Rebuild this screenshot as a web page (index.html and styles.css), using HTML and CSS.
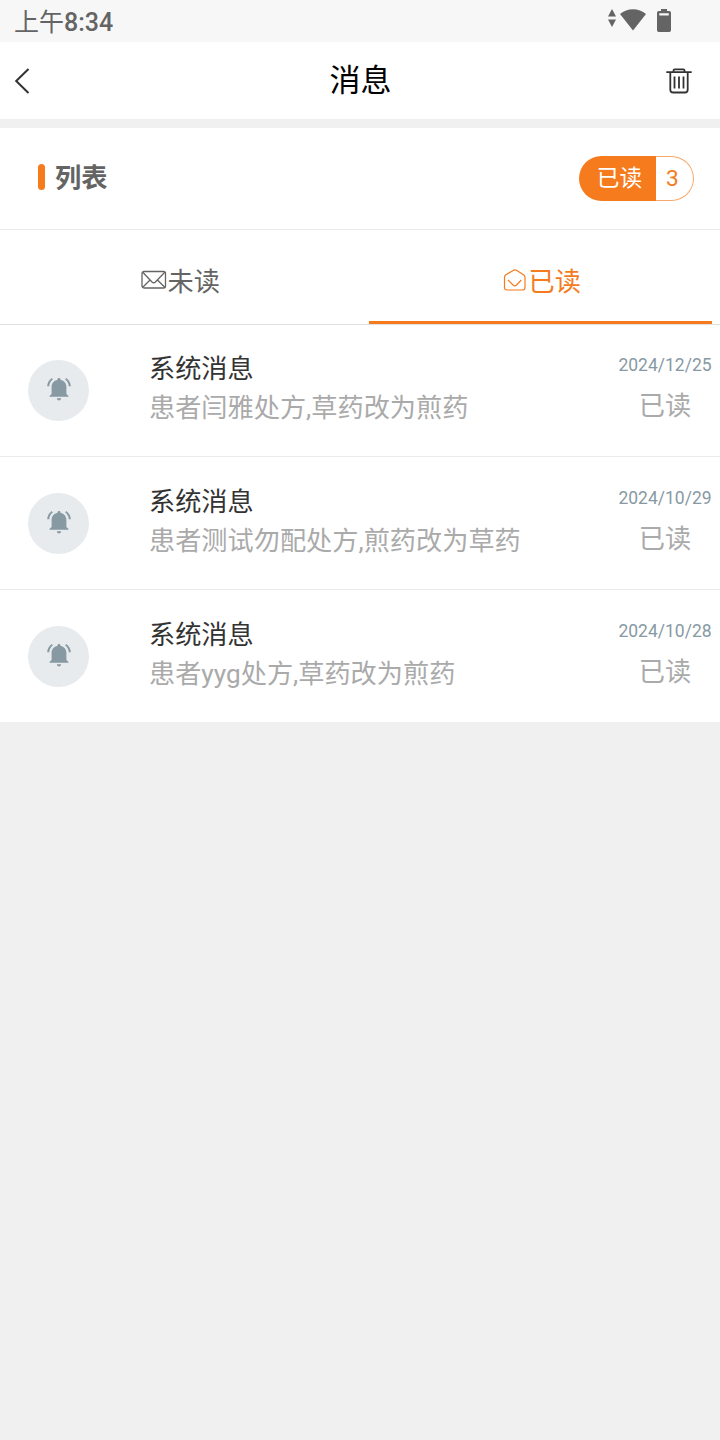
FILE: index.html
```html
<!DOCTYPE html>
<html lang="zh-CN">
  <head>
    <meta charset="UTF-8">
    <title>消息</title>
    <link rel="stylesheet" href="styles.css">
  </head>
  <body>
    <svg class="sprite">
      <symbol id="bell" viewBox="0 0 24 24">
        <path d="M5.300 1.700C2.900 3.400 1.400 6 1.200 9.200M18.700 1.700C21.100 3.400 22.600 6 22.800 9.200" fill="none" stroke="currentColor" stroke-width="2"/>
        <path d="M12 .9c.9 0 1.600.7 1.600 1.600v.4c3.500.7 5.800 3.300 5.800 6.900v7.300l2 1.700v1H2.600v-1l2-1.700V9.800c0-3.600 2.300-6.200 5.800-6.900v-.4c0-.9.700-1.600 1.600-1.600zM9.900 21.300h4.200c0 1.300-.9 2.200-2.100 2.200s-2.100-.9-2.100-2.200z" fill="currentColor"/>
      </symbol>
    </svg>

    <div class="status">
      <span class="time">上午<b>8:34</b></span>
      <svg class="status-icons" width="66" height="26" viewBox="0 0 66 26" fill="#646464">
        <path d="M4 2L8 9.500H0zM4 20L0 12.500H8z"/>
        <path d="M12 7C19.200.7 30.800.7 38 7L25 23.500z"/>
        <path fill-rule="evenodd" d="M53 2h6v2h2.300q1.700 0 1.700 1.700v17.600q0 1.700-1.700 1.700H50.700Q49 25 49 23.300V5.700Q49 4 50.700 4H53zM51.300 6.300v2.200h9.500v-2.200z"/>
      </svg>
    </div>

    <header class="header">
      <svg class="back" width="16" height="26" viewBox="0 0 16 26"><path d="M14.500 1L2.200 13L14.500 25" fill="none" stroke="#323233" stroke-width="2"/></svg>
      <h1>消息</h1>
      <svg class="trash" width="26" height="26" viewBox="0 0 26 26" fill="none" stroke="#323233" stroke-width="1.800">
        <path d="M.3 4.200h25.400M7.500 4V2.500q0-1.200 1.200-1.200h8.600q1.200 0 1.200 1.200V4M4.300 4.500v17.200q0 2.800 2.800 2.800h11.800q2.800 0 2.800-2.800v-17.200M8.500 8.500v12M13 8.500v12M17.500 8.500v12"/>
      </svg>
    </header>

    <div class="panel">
      <div class="section">
        <span class="mark"></span>
        <h2>列表</h2>
        <div class="count">
          <span class="count-label">已读</span>
          <span class="count-num">3</span>
        </div>
      </div>

      <div class="tabs">
        <div class="tab">
          <svg width="26" height="20" viewBox="0 0 26 20" fill="none" stroke="#646464" stroke-width="1.300">
            <rect x="1" y="1.500" width="23.500" height="16.500" rx="2"/>
            <path d="M1.500 2l9.500 10q1.700 1.600 3.400 0L24 2M1.500 17.500l7.300-7.300M24 17.500l-7.300-7.300"/>
          </svg>
          <span>未读</span>
        </div>
        <div class="tab active">
          <svg width="24" height="24" viewBox="0 0 24 24" fill="none" stroke="#f57b1d" stroke-width="1.200">
            <path d="M1.500 9.300Q1.500 7.600 3 6.700L10.200 2.400Q12 1.300 13.800 2.400L20.500 6.700Q22 7.600 22 9.300V19.500Q22 22 19.500 22H4Q1.500 22 1.500 19.500z"/>
            <path d="M5 12l5.300 5.200q1.500 1.300 3 0L18.300 12"/>
          </svg>
          <span>已读</span>
        </div>
      </div>

      <div class="list">
        <div class="item">
          <div class="avatar"><svg><use href="#bell"/></svg></div>
          <div class="content">
            <div class="title">系统消息</div>
            <div class="desc">患者闫雅处方,草药改为煎药</div>
          </div>
          <div class="action">
            <div class="date">2024/12/25</div>
            <div class="state">已读</div>
          </div>
        </div>
        <div class="item">
          <div class="avatar"><svg><use href="#bell"/></svg></div>
          <div class="content">
            <div class="title">系统消息</div>
            <div class="desc">患者测试勿配处方,煎药改为草药</div>
          </div>
          <div class="action">
            <div class="date">2024/10/29</div>
            <div class="state">已读</div>
          </div>
        </div>
        <div class="item">
          <div class="avatar"><svg><use href="#bell"/></svg></div>
          <div class="content">
            <div class="title">系统消息</div>
            <div class="desc">患者yyg处方,草药改为煎药</div>
          </div>
          <div class="action">
            <div class="date">2024/10/28</div>
            <div class="state">已读</div>
          </div>
        </div>
      </div>
    </div>
  </body>
</html>
```

FILE: styles.css
```css
* {
  box-sizing: border-box;
}
body {
  margin: 0;
  min-height: 1440px;
  background: #f0f0f0;
  font-family: Roboto, "Noto Sans CJK SC", sans-serif;
  font-size: 26.2px;
  color: #646464;
}
h1, h2 {
  margin: 0;
}
svg {
  display: block;
}
.sprite {
  display: none;
}
.status {
  display: flex;
  justify-content: space-between;
  height: 42px;
  padding: 0 46px 0 14px;
  background: #f7f7f7;
}
.time {
  font-size: 25px;
  line-height: 45px;
}
.time b {
  font-weight: 500;
}
.status-icons {
  margin-top: 7px;
}
.header {
  display: grid;
  grid-template-columns: 60px 1fr 60px;
  align-items: center;
  height: 77px;
  padding: 0 28px 0 14px;
  background: #fff;
}
.header h1 {
  padding-left: 15px;
  font-size: 31px;
  font-weight: 400;
  line-height: 75px;
  text-align: center;
  color: #000;
}
.trash {
  justify-self: end;
}
.panel {
  margin-top: 9px;
  background: #fff;
}
.section {
  display: flex;
  align-items: center;
  height: 102px;
  padding: 0 26px 0 38px;
  border-bottom: 1px solid #ebebeb;
}
.mark {
  width: 7px;
  height: 26px;
  margin: 0 10px 4px 0;
  border-radius: 4px;
  background: #f57b1d;
}
.section h2 {
  padding-bottom: 2px;
  font-size: 26.2px;
  font-weight: 700;
  line-height: 40px;
}
.count {
  display: flex;
  width: 115px;
  height: 45px;
  margin-left: auto;
  border-radius: 23px;
  font-size: 22.7px;
  line-height: 46px;
  text-align: center;
}
.count-label {
  width: 77px;
  padding-left: 4px;
  border-radius: 23px 0 0 23px;
  background: #f57b1d;
  color: #fff;
}
.count-num {
  flex: 1;
  padding-right: 4px;
  border: 1px solid #f7a96b;
  border-left: 0;
  border-radius: 0 23px 23px 0;
  line-height: 44px;
  color: #f57b1d;
}
.tabs {
  display: flex;
  gap: 18px;
  height: 95px;
  padding: 0 8px;
  border-bottom: 1px solid #e0e0e0;
}
.tab {
  display: flex;
  flex: 1;
  align-items: center;
  justify-content: center;
  gap: 1px;
  padding: 9px 0 0 2px;
  border-bottom: 3px solid transparent;
}
.tab.active {
  gap: 2px;
  padding-left: 3px;
  border-color: #f57b1d;
  color: #f57b1d;
}
/* first row starts on the tabs' border line */
.list {
  margin-top: -1px;
}
.item {
  display: flex;
  height: 133px;
  padding: 0 8px 0 28px;
  border-bottom: 1px solid #ebebeb;
}
.item:last-child {
  height: 132px;
  border-bottom: 0;
}
.avatar {
  display: flex;
  justify-content: center;
  width: 61px;
  height: 61px;
  margin-top: 36px;
  padding-top: 17px;
  border-radius: 50%;
  background: #e7ebed;
  color: #8799a3;
}
.avatar svg {
  width: 24px;
  height: 24px;
}
.content {
  flex: 1;
  margin-left: 60px;
  padding-top: 26px;
  line-height: 39px;
}
.title {
  color: #333;
}
.desc {
  color: #aaa;
}
.action {
  width: 94px;
  padding-top: 29px;
  text-align: center;
}
.date {
  font-size: 17.5px;
  line-height: 24px;
  color: #8799a3;
}
.state {
  margin-top: 10px;
  line-height: 39px;
  color: #aaa;
}
```
